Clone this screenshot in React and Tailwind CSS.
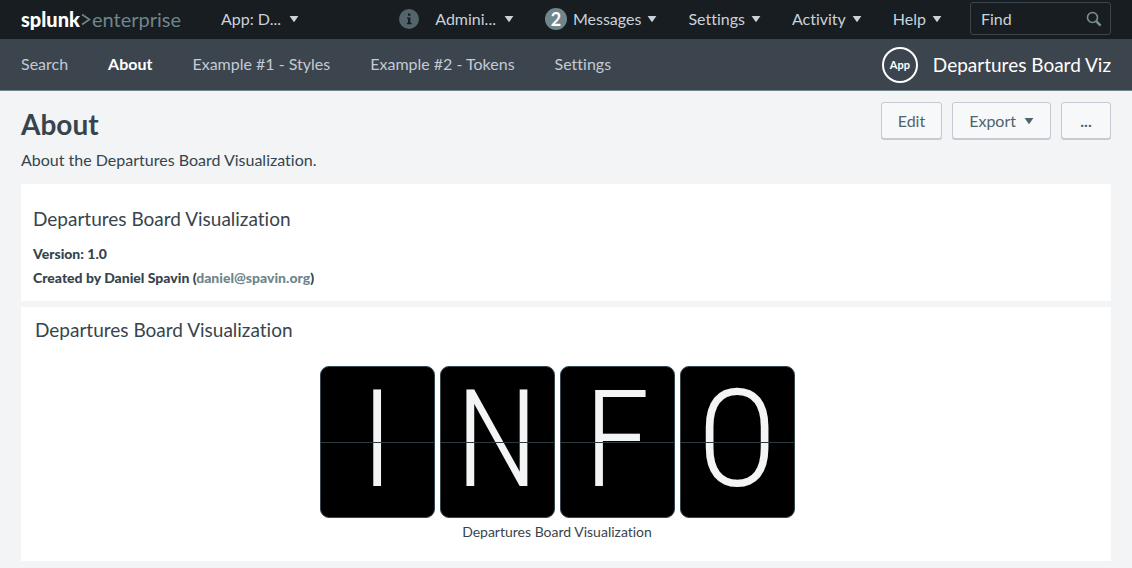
import React from "react";

const NAV_LINKS = [
  { label: "Search" },
  { label: "About", active: true },
  { label: "Example #1 - Styles" },
  { label: "Example #2 - Tokens" },
  { label: "Settings" },
];

const BOARD = ["I", "N", "F", "O"];

function Caret() {
  return (
    <svg className="h-2 w-2.5 shrink-0" viewBox="0 0 10 8" fill="currentColor" aria-hidden="true">
      <path d="M0.6 1h8.8L5.6 6.5q-.6.8-1.2 0z" />
    </svg>
  );
}

function MenuButton({ children, wide }) {
  return (
    <button type="button" className={`flex items-center whitespace-nowrap ${wide ? "gap-2" : "gap-1.5"}`}>
      {children}
      <Caret />
    </button>
  );
}

function Logo() {
  return (
    <a href="#home" className="flex items-center text-xl leading-6">
      <span className="font-black text-white">splunk</span>
      <svg className="h-4 w-3 text-[#6f868c]" viewBox="0 0 12 16" fill="none" stroke="currentColor" strokeWidth="1.6" aria-hidden="true">
        <path d="M2 3.5 9.5 8.5 2 13.5" />
      </svg>
      <span className="text-[#6f868c]">enterprise</span>
    </a>
  );
}

function InfoIcon() {
  return (
    <svg className="size-5" viewBox="0 0 20 20" aria-hidden="true">
      <circle cx="10" cy="10" r="10" fill="#53646b" />
      <path d="M9 4.5h2.4v2.2H9zM8 8.4h3.4v5.4h1.2v1.4H7.8v-1.4H9V9.8H8z" fill="#171d21" />
    </svg>
  );
}

function TopBar() {
  return (
    <header className="flex h-[39px] items-center bg-[#171d21] px-[21px] pb-0.5 text-base leading-6 text-[#c9d2da]">
      <Logo />
      <div className="ml-10">
        <MenuButton wide>App: D...</MenuButton>
      </div>
      <div className="ml-auto flex items-center gap-[31px]">
        <div className="flex items-center gap-4">
          <InfoIcon />
          <MenuButton wide>Admini...</MenuButton>
        </div>
        <MenuButton>
          <span className="flex size-[22px] items-center justify-center rounded-full bg-[#6f868c] text-lg font-bold leading-5 text-white">2</span>
          Messages
        </MenuButton>
        <MenuButton>Settings</MenuButton>
        <MenuButton>Activity</MenuButton>
        <MenuButton>Help</MenuButton>
      </div>
      <label className="ml-7 flex h-[33px] w-[141px] items-center rounded-[3px] border border-[#3c444d] pl-2.5 pr-2">
        <span className="hidden">Find</span>
        <input
          type="text"
          placeholder="Find"
          aria-label="Find"
          className="h-7 min-w-0 flex-1 bg-transparent outline-none placeholder:text-[#c9d2da]"
        />
        <svg className="size-4" viewBox="0 0 16 16" fill="none" stroke="#7b8f97" aria-hidden="true">
          <circle cx="6.5" cy="6.5" r="5" strokeWidth="1.6" />
          <path d="m10.4 10.4 4.2 4.2" strokeWidth="2.4" />
        </svg>
      </label>
    </header>
  );
}

function AppNav() {
  return (
    <nav className="flex h-[52px] items-center border-b border-[#6f868c] bg-[#3c444d] px-[21px] text-base leading-6 text-[#c3cbd4]">
      <div className="flex gap-10 pb-0.5">
        {NAV_LINKS.map(({ label, active }) => (
          <a
            key={label}
            href="#nav"
            aria-current={active ? "page" : undefined}
            className={active ? "font-bold text-white" : ""}
          >
            {label}
          </a>
        ))}
      </div>
      <a href="#app" className="ml-auto flex items-center gap-[15px] text-[19px] leading-6 text-white">
        <span className="flex size-9 items-center justify-center rounded-full border-2 border-white text-[11px] font-bold leading-4">
          App
        </span>
        Departures Board Viz
      </a>
    </nav>
  );
}

const BUTTON =
  "flex h-[37px] items-center gap-2 rounded-[3px] border border-[#c3cbd4] bg-[#f7f8fa] px-4 text-base text-[#4f636b] shadow-[0_1px_0_#c3cbd4]";

function FlapTile({ letter }) {
  return (
    <div className="relative flex h-[152px] w-[115px] items-center justify-center rounded-[9px] border border-[#34474f] bg-black pb-1">
      <span className="font-['Roboto_Condensed','Liberation_Sans_Narrow',Roboto,sans-serif] text-[136px] font-light leading-[146px] text-[#f2f4f5]">
        {letter}
      </span>
      <div className="absolute inset-x-0 top-1/2 h-px bg-[#2c3b42]" />
    </div>
  );
}

export default function App() {
  return (
    <div className="min-h-screen bg-[#f2f4f5] font-[Lato,sans-serif] text-[#37444d] [font-variant-ligatures:none]">
      <TopBar />
      <AppNav />
      <main className="px-[21px] pb-1.5 pt-[11px]">
        <div className="flex items-start justify-between">
          <div>
            <h1 className="pt-1.5 text-[28px] font-bold leading-8">About</h1>
            <p className="mt-2 text-base leading-6">About the Departures Board Visualization.</p>
          </div>
          <div className="flex gap-2.5">
            <button type="button" className={BUTTON}>Edit</button>
            <button type="button" className={BUTTON}>
              Export
              <Caret />
            </button>
            <button type="button" className={`${BUTTON} w-[50px] justify-center font-bold`} aria-label="More actions">...</button>
          </div>
        </div>

        <section className="mt-3 bg-white px-3 pb-[11px] pt-[23px]">
          <h2 className="text-[19px] leading-6">Departures Board Visualization</h2>
          <div className="mt-[11px] text-sm font-black leading-6">
            <p>Version: 1.0</p>
            <p>
              Created by Daniel Spavin (
              <a href="mailto:daniel@spavin.org" className="text-[#6f868c]">daniel@spavin.org</a>)
            </p>
          </div>
        </section>

        <section className="mt-1.5 bg-white px-3.5 pb-[19px] pt-[11px]">
          <h2 className="text-[19px] leading-6">Departures Board Visualization</h2>
          <figure className="mt-6 pr-[18px]">
            <div className="flex justify-center gap-[5px]">
              {BOARD.map((letter) => (
                <FlapTile key={letter} letter={letter} />
              ))}
            </div>
            <figcaption className="mt-1 text-center text-sm leading-5">Departures Board Visualization</figcaption>
          </figure>
        </section>
      </main>
    </div>
  );
}
